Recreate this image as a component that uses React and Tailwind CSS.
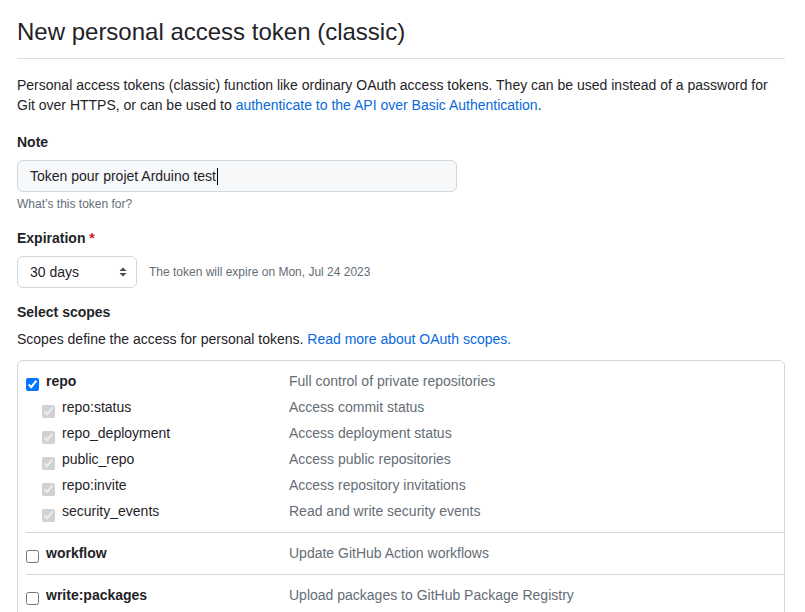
import React from "react";

const subs = [
  ["repo:status", "Access commit status"],
  ["repo_deployment", "Access deployment status"],
  ["public_repo", "Access public repositories"],
  ["repo:invite", "Access repository invitations"],
  ["security_events", "Read and write security events"],
];

function Row({ label, desc, bold, sub, checked, disabled }) {
  return (
    <div className="flex h-[26px] items-start">
      <div className={`flex w-[263px] shrink-0 items-start ${sub ? "pl-[16px]" : ""}`}>
        <input
          type="checkbox"
          defaultChecked={checked}
          disabled={disabled}
          className={`m-0 h-[13px] w-[13px] shrink-0 ${sub ? "mt-[11px]" : "mt-[10px]"}`}
        />
        <span className={`ml-[7px] leading-[26px] ${bold ? "font-bold" : ""} text-[#1f2328]`}>{label}</span>
      </div>
      <div className="leading-[26px] text-[#656d76]">{desc}</div>
    </div>
  );
}

export default function App() {
  return (
    <div
      className="min-h-[612px] w-[805px] bg-white pt-[14px] pl-[17px] pr-[20px] text-[14px] text-[#1f2328]"
      style={{ fontFamily: '"Liberation Sans", Arial, sans-serif' }}
    >
      <div className="border-b border-[#d8dee4] pb-[8px]">
        <h1 className="text-[24px] leading-[36px] font-normal">New personal access token (classic)</h1>
      </div>
      <p className="mt-[16px] leading-[20px]">
        Personal access tokens (classic) function like ordinary OAuth access tokens. They can be used instead of a password for Git over HTTPS, or can be used to{" "}
        <a className="text-[#0969da]">authenticate to the API over Basic Authentication</a>.
      </p>

      <div className="mt-[17px] h-[21px] font-bold leading-[21px]">Note</div>
      <div className="mt-[7px] flex h-[32px] w-[440px] items-center rounded-[6px] border border-[#d0d7de] bg-[#f6f8fa] px-[12px]">
        <span>Token pour projet Arduino test</span>
        <span className="ml-px inline-block h-[17px] w-px bg-black" />
      </div>
      <div className="mt-[3px] text-[12px] leading-[18px] text-[#656d76]">What’s this token for?</div>

      <div className="mt-[15px] h-[21px] font-bold leading-[21px]">
        Expiration <span className="text-[#cf222e]">*</span>
      </div>
      <div className="mt-[7px] flex items-center">
        <div className="flex h-[32px] w-[120px] items-center justify-between rounded-[6px] border border-[#d0d7de] bg-white pl-[12px] pr-[9px]">
          <span>30 days</span>
          <svg width="8" height="12" viewBox="0 0 8 12" className="text-[#424a53]">
            <path d="M4 1.5 L7.5 5 H0.5 Z" fill="currentColor" />
            <path d="M4 10.5 L7.5 7 H0.5 Z" fill="currentColor" />
          </svg>
        </div>
        <span className="ml-[12px] text-[12px] text-[#656d76]">The token will expire on Mon, Jul 24 2023</span>
      </div>

      <div className="mt-[14px] h-[21px] font-bold leading-[21px]">Select scopes</div>
      <p className="mt-[6px] leading-[20px]">
        Scopes define the access for personal tokens. <a className="text-[#0969da]">Read more about OAuth scopes.</a>
      </p>

      <div className="mt-[11px] rounded-[6px] border border-[#d0d7de] pl-[8px]">
        <div className="border-b border-[#d0d7de] pt-[7px] pb-[8px]">
          <Row label="repo" desc="Full control of private repositories" bold checked />
          {subs.map(([l, d]) => (
            <Row key={l} label={l} desc={d} sub checked disabled />
          ))}
        </div>
        <div className="border-b border-[#d0d7de] pt-[7px] pb-[8px]">
          <Row label="workflow" desc="Update GitHub Action workflows" bold />
        </div>
        <div className="pt-[7px] pb-[9px]">
          <Row label="write:packages" desc="Upload packages to GitHub Package Registry" bold />
        </div>
      </div>
    </div>
  );
}
